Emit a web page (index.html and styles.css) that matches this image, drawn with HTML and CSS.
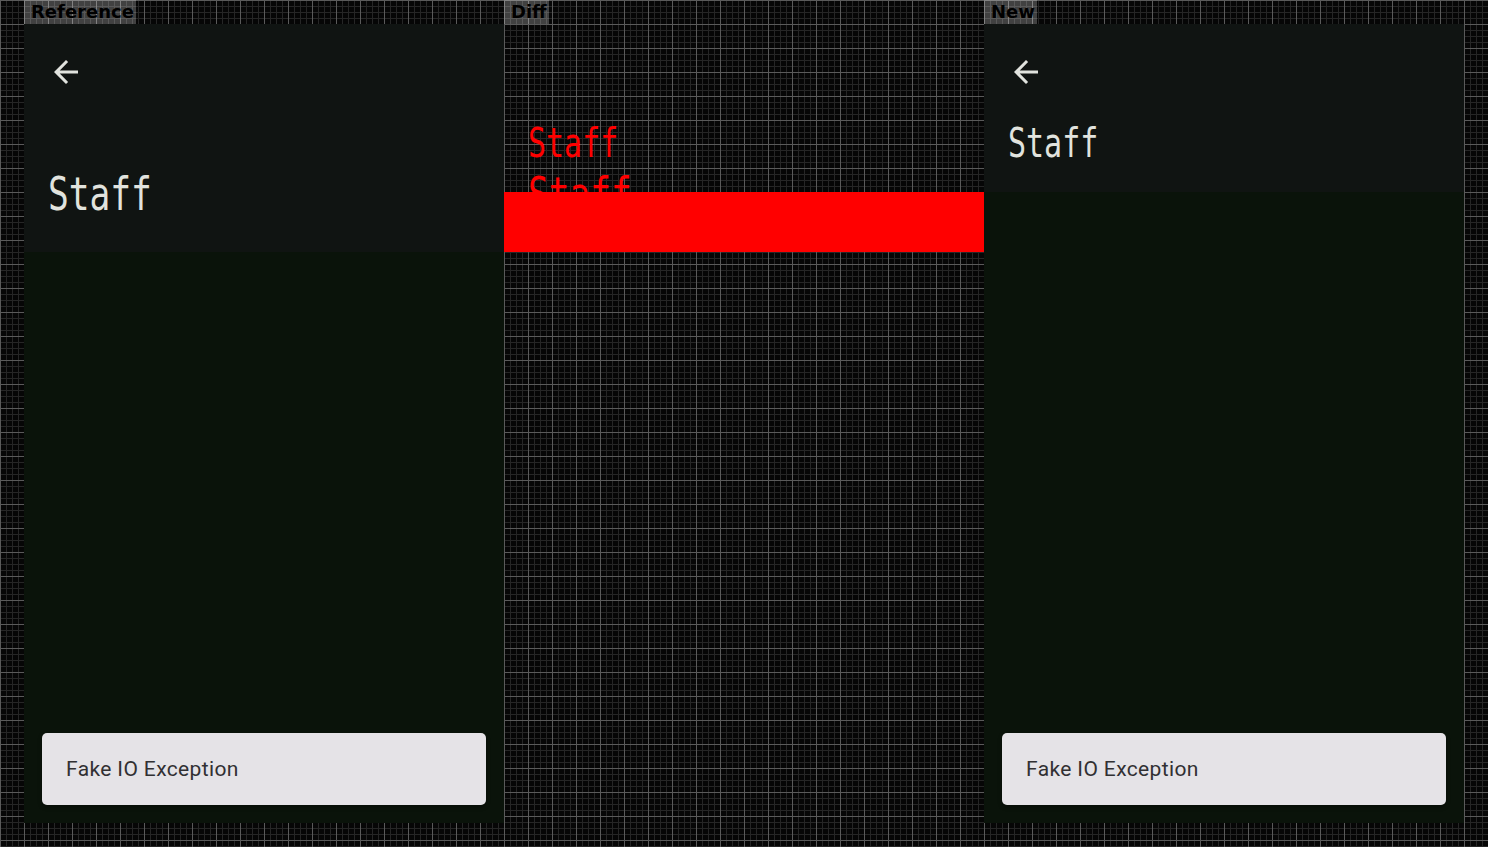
FILE: index.html
```html
<!DOCTYPE html>
<html lang="en">
<head>
<meta charset="utf-8">
<title>Screenshot diff</title>
<link rel="stylesheet" href="styles.css">
</head>
<body>
<div class="board">
  <section class="col">
    <div class="label">Reference</div>
    <div class="phone">
      <header class="bar bar-large">
        <div class="nav-row">
          <span class="nav-icon">
            <svg viewBox="0 0 24 24" width="36" height="36"><path fill="currentColor" d="M20 11H7.83l5.59-5.59L12 4l-8 8 8 8 1.41-1.41L7.83 13H20v-2z"/></svg>
          </span>
        </div>
        <h1 class="title title-large">Staff</h1>
      </header>
      <main class="content"></main>
      <div class="snack">Fake IO Exception</div>
    </div>
  </section>

  <section class="col">
    <div class="label">Diff</div>
    <div class="diff">
      <div class="diff-top"></div>
      <div class="diff-band"></div>
      <span class="diff-text diff-text-new">Staff</span>
      <span class="diff-text diff-text-ref">Staff</span>
    </div>
  </section>

  <section class="col">
    <div class="label">New</div>
    <div class="phone">
      <header class="bar bar-medium">
        <div class="nav-row">
          <span class="nav-icon">
            <svg viewBox="0 0 24 24" width="36" height="36"><path fill="currentColor" d="M20 11H7.83l5.59-5.59L12 4l-8 8 8 8 1.41-1.41L7.83 13H20v-2z"/></svg>
          </span>
        </div>
        <h1 class="title title-medium">Staff</h1>
      </header>
      <main class="content"></main>
      <div class="snack">Fake IO Exception</div>
    </div>
  </section>
</div>
</body>
</html>
```

FILE: styles.css
```css
html, body {
  margin: 0;
  min-height: 100vh;
}

body {
  background-color: #060606;
  background-image:
    linear-gradient(to right, #5a5a5a 1px, transparent 1px),
    linear-gradient(to bottom, #5a5a5a 1px, transparent 1px),
    linear-gradient(to right, #262626 1px, transparent 1px),
    linear-gradient(to bottom, #262626 1px, transparent 1px);
  background-size: 24px 24px, 24px 24px, 6px 6px, 6px 6px;
  overflow: hidden;
}

.board {
  display: flex;
  padding-left: 24px;
}

.col {
  width: 480px;
  display: flex;
  flex-direction: column;
  align-items: flex-start;
}

.label {
  height: 24px;
  line-height: 24px;
  padding: 0 2px 0 7px;
  background: rgba(255, 255, 255, 0.24);
  color: #000;
  font-family: "DejaVu Sans", sans-serif;
  font-weight: bold;
  font-size: 18px;
}

.phone {
  width: 480px;
  height: 799px;
  background: #0a130a;
  display: flex;
  flex-direction: column;
}

.bar {
  background: #101412;
  display: flex;
  flex-direction: column;
  flex: none;
}

.bar-large { height: 228px; }
.bar-medium { height: 168px; }

.nav-row {
  height: 96px;
  display: flex;
  align-items: center;
  padding-left: 24px;
}

.nav-icon {
  width: 36px;
  height: 36px;
  color: #e1e3de;
  display: block;
}

.nav-icon svg { display: block; }

.title {
  margin: 0;
  padding-left: 24px;
  font-family: "DejaVu Sans Mono", monospace;
  font-weight: normal;
  line-height: 40px;
  color: #e1e3de;
  transform: scaleX(0.75);
  transform-origin: 24px 0;
  white-space: nowrap;
}

.title-large { font-size: 46px; margin-top: 54px; }
.title-medium { font-size: 40px; margin-top: 3px; }

.content { flex: 1; }

.snack {
  margin: 0 18px 18px;
  height: 72px;
  border-radius: 5px;
  background: #e5e3e7;
  color: #313033;
  font-family: Roboto, "Noto Sans", sans-serif;
  font-size: 21px;
  letter-spacing: 0.375px;
  display: flex;
  align-items: center;
  padding-left: 24px;
  box-shadow: 0 2px 4px rgba(0, 0, 0, 0.35);
}

.diff {
  position: relative;
  width: 480px;
  height: 799px;
  display: flex;
  flex-direction: column;
}

.diff-top { height: 168px; flex: none; }

.diff-band {
  height: 60px;
  background: #ff0000;
  position: relative;
  z-index: 1;
}

.diff-text {
  position: absolute;
  left: 24px;
  font-family: "DejaVu Sans Mono", monospace;
  line-height: 40px;
  color: #ff0000;
  transform: scaleX(0.75);
  transform-origin: 0 0;
  white-space: nowrap;
}

.diff-text-new { top: 99px; font-size: 40px; }
.diff-text-ref { top: 150px; font-size: 46px; }
```
